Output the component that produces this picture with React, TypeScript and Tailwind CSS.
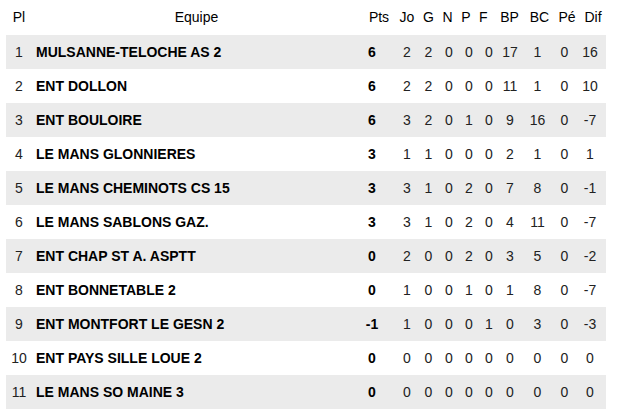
import React from "react";

type Row = {
  pl: number;
  team: string;
  stats: (string | number)[];
};

const rows: Row[] = [
  { pl: 1, team: "MULSANNE-TELOCHE AS 2", stats: [6, 2, 2, 0, 0, 0, 17, 1, 0, 16] },
  { pl: 2, team: "ENT DOLLON", stats: [6, 2, 2, 0, 0, 0, 11, 1, 0, 10] },
  { pl: 3, team: "ENT BOULOIRE", stats: [6, 3, 2, 0, 1, 0, 9, 16, 0, -7] },
  { pl: 4, team: "LE MANS GLONNIERES", stats: [3, 1, 1, 0, 0, 0, 2, 1, 0, 1] },
  { pl: 5, team: "LE MANS CHEMINOTS CS 15", stats: [3, 3, 1, 0, 2, 0, 7, 8, 0, -1] },
  { pl: 6, team: "LE MANS SABLONS GAZ.", stats: [3, 3, 1, 0, 2, 0, 4, 11, 0, -7] },
  { pl: 7, team: "ENT CHAP ST A. ASPTT", stats: [0, 2, 0, 0, 2, 0, 3, 5, 0, -2] },
  { pl: 8, team: "ENT BONNETABLE 2", stats: [0, 1, 0, 0, 1, 0, 1, 8, 0, -7] },
  { pl: 9, team: "ENT MONTFORT LE GESN 2", stats: [-1, 1, 0, 0, 0, 1, 0, 3, 0, -3] },
  { pl: 10, team: "ENT PAYS SILLE LOUE 2", stats: [0, 0, 0, 0, 0, 0, 0, 0, 0, 0] },
  { pl: 11, team: "LE MANS SO MAINE 3", stats: [0, 0, 0, 0, 0, 0, 0, 0, 0, 0] },
];

// per stat column: header label, header nudge, data nudge
const cols = [
  { label: "Pts", head: "pl-[6px]", cell: "pr-[8px] font-bold text-black" },
  { label: "Jo", head: "pl-[6px]", cell: "pl-[6px]" },
  { label: "G", head: "", cell: "" },
  { label: "N", head: "pr-[3px]", cell: "" },
  { label: "P", head: "pr-[6px]", cell: "" },
  { label: "F", head: "pr-[12px]", cell: "" },
  { label: "BP", head: "pr-[4px]", cell: "pr-[3px]" },
  { label: "BC", head: "pl-[4px]", cell: "" },
  { label: "Pé", head: "pl-[5px]", cell: "" },
  { label: "Dif", head: "pl-[2px]", cell: "pr-[4px]" },
];

const grid =
  "grid grid-cols-[25px_331px_28px_28px_21px_20px_20px_20px_25px_27px_27px_28px]";

export default function App() {
  return (
    <div className="w-[618px] h-[413px] bg-white font-['Liberation_Sans',Arial,sans-serif] text-[14px] text-[#222]">
      <div className="ml-[6px] w-[600px]">
        {/* Header */}
        <div className={`${grid} h-[35px] items-center text-black`}>
          <div className="text-center pl-px">Pl</div>
          <div className="text-center">Equipe</div>
          {cols.map((c) => (
            <div key={c.label} className={`text-center whitespace-nowrap ${c.head}`}>
              {c.label}
            </div>
          ))}
        </div>

        {/* Rows */}
        {rows.map((r, i) => (
          <div
            key={r.pl}
            className={`${grid} h-[34px] items-center ${
              i % 2 === 0 ? "bg-[#ebebeb]" : "bg-white"
            }`}
          >
            <div className="text-center pl-px">{r.pl}</div>
            <div className="pl-[5px] font-bold text-black whitespace-nowrap">
              {r.team}
            </div>
            {r.stats.map((v, j) => (
              <div key={j} className={`text-center whitespace-nowrap ${cols[j].cell}`}>
                {v}
              </div>
            ))}
          </div>
        ))}
      </div>
    </div>
  );
}
